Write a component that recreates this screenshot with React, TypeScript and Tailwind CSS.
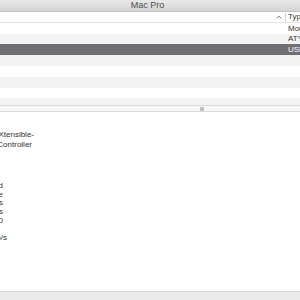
import React from 'react'

const rows = [
  { type: 'Mouse', h: 'h-[11px]', bg: 'bg-white', sel: false },
  { type: 'ATY,Radeon', h: 'h-[10px]', bg: 'bg-[#f3f3f3]', sel: false },
  { type: 'USB', h: 'h-[11px]', bg: 'bg-[#6f6e72]', sel: true },
  { type: '', h: 'h-[11px]', bg: 'bg-[#f3f3f3]', sel: false },
  { type: '', h: 'h-[11px]', bg: 'bg-white', sel: false },
  { type: '', h: 'h-[11px]', bg: 'bg-[#f3f3f3]', sel: false },
  { type: '', h: 'h-[10px]', bg: 'bg-white', sel: false },
  { type: '', h: 'h-[7px]', bg: 'bg-[#f3f3f3]', sel: false },
]

// right-aligned lines, clipped at the left edge of the window
const details = [
  { text: 'Status: Connected', w: 'w-[3px]' },
  { text: 'Manufacturer: Apple', w: 'w-[3px]' },
  { text: 'Built-in: Yes', w: 'w-[3px]' },
  { text: 'Removable: Yes', w: 'w-[3px]' },
  { text: 'Current Available (mA): 500', w: 'w-[3px]' },
  { text: '\u00a0', w: 'w-[3px]' },
  { text: 'Speed: Up to 5 Gb/s', w: 'w-[7px]' },
]

export default function App() {
  return (
    <div className="w-[300px] h-[300px] overflow-hidden bg-white flex flex-col font-['Liberation_Sans',Arial,sans-serif] text-[8px] text-[#333333]">
      {/* Title bar */}
      <div className="h-[12px] shrink-0 bg-gradient-to-b from-[#e9e9e9] to-[#d4d4d4] border-b border-[#c4c4c4] flex items-center justify-center pr-[5px] text-[9px] text-[#4d4d4d] leading-none">
        Mac Pro
      </div>

      {/* Column header */}
      <div className="h-[11px] shrink-0 flex items-center border-b border-[#e3e3e3] bg-white">
        <div className="flex-1" />
        <svg width="6" height="4" viewBox="0 0 6 4" className="mr-[3px]">
          <polyline points="0.5,3.5 3,1 5.5,3.5" fill="none" stroke="#8a8a8a" strokeWidth="1" />
        </svg>
        <div className="w-px h-[9px] bg-[#d2d2d2]" />
        <div className="w-[14px] pl-[2px] whitespace-nowrap overflow-hidden leading-none">Type</div>
      </div>

      {/* Rows */}
      {rows.map((r, i) => (
        <div key={i} className={`${r.h} ${r.bg} shrink-0 flex items-center`}>
          <div className="flex-1" />
          <div className={`w-[14px] pl-[2px] whitespace-nowrap overflow-hidden leading-none ${r.sel ? 'text-white' : 'text-[#333333]'}`}>
            {r.type}
          </div>
        </div>
      ))}

      {/* Splitter */}
      <div className="h-[7px] shrink-0 border-y border-[#dadada] bg-[#f6f6f6] flex items-center">
        <div className="ml-[200px] w-[4px] h-[4px] rounded-[1px] bg-[#bdbdbd]" />
      </div>

      {/* Detail pane */}
      <div className="flex-1 overflow-hidden bg-white pt-[18px]">
        <div className="leading-[10px]">
          <div className="w-[34px] flex justify-end whitespace-nowrap">USB 3.0 eXtensible-</div>
          <div className="w-[32px] flex justify-end whitespace-nowrap">Host Controller</div>
        </div>
        <div className="mt-[32px] leading-[8.7px]">
          {details.map((d, i) => (
            <div key={i} className={`${d.w} flex justify-end whitespace-nowrap`}>{d.text}</div>
          ))}
        </div>
      </div>

      {/* Bottom bar */}
      <div className="h-[9px] shrink-0 border-t border-[#d8d8d8] bg-[#ebebeb]" />
    </div>
  )
}
